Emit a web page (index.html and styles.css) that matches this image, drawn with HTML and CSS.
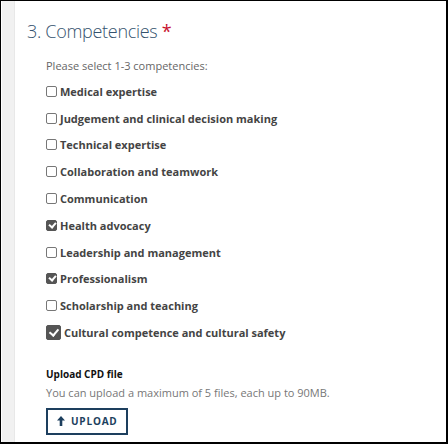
FILE: index.html
```html
<!DOCTYPE html>
<html>
<head>
  <title>Competencies</title>
  <link rel="stylesheet" href="styles.css">
</head>
<body>
  <div class="frame">
    <div class="strip"></div>
    <div class="panel">
      <h2 class="title">3. Competencies <span class="req">*</span></h2>
      <p class="hint">Please select 1-3 competencies:</p>

      <div class="checks">
        <label class="check"><span class="box"></span>Medical expertise</label>
        <label class="check"><span class="box"></span>Judgement and clinical decision making</label>
        <label class="check"><span class="box"></span>Technical expertise</label>
        <label class="check"><span class="box"></span>Collaboration and teamwork</label>
        <label class="check"><span class="box"></span>Communication</label>
        <label class="check"><span class="box on"></span>Health advocacy</label>
        <label class="check"><span class="box"></span>Leadership and management</label>
        <label class="check"><span class="box on"></span>Professionalism</label>
        <label class="check"><span class="box"></span>Scholarship and teaching</label>
        <label class="check"><span class="box on big"></span>Cultural competence and cultural safety</label>
      </div>

      <div class="upload">
        <div class="upload-title">Upload CPD file</div>
        <div class="upload-hint">You can upload a maximum of 5 files, each up to 90MB.</div>
        <button class="upload-btn">
          <svg width="8" height="10" viewBox="0 0 8 10"><path d="M4 0 L8 4.5 H5.3 V10 H2.7 V4.5 H0 Z" fill="#1d3f5e"/></svg>
          UPLOAD
        </button>
      </div>
    </div>
  </div>
</body>
</html>
```

FILE: styles.css
```css
html, body {
  margin: 0;
  padding: 0;
  background: #fff;
}

.frame {
  width: 448px;
  height: 444px;
  box-sizing: border-box;
  border: 1px solid #000;
  border-bottom-width: 2px;
  border-right-width: 2px;
  display: flex;
  overflow: hidden;
  font-family: "Open Sans", Arial, sans-serif;
}

.strip {
  width: 12px;
  margin-left: 1px;
  background: #f1f1f1;
  border-right: 1px solid #e8e8e8;
}

.panel {
  flex: 1;
  padding: 0 0 0 12px;
}

.title {
  margin: 15px 0 0 0;
  font-size: 18px;
  font-weight: 300;
  letter-spacing: -0.3px;
  color: #34526e;
  line-height: 30px;
}

.req {
  color: #c8102e;
  font-weight: 400;
}

.hint {
  margin: 12px 0 0 19px;
  font-size: 11px;
  color: #666;
  line-height: 16px;
}

.checks {
  margin: 4px 0 0 19px;
  display: flex;
  flex-direction: column;
}

.check {
  display: flex;
  align-items: center;
  height: 26.8px;
  font-size: 11px;
  font-weight: 700;
  color: #444;
}

.box {
  width: 9px;
  height: 9px;
  border: 1px solid #777;
  border-radius: 2px;
  margin-right: 3px;
  position: relative;
}

.box.on {
  background: #555;
  border-color: #555;
}

.box.on::after {
  content: "";
  position: absolute;
  left: 2.5px;
  top: 0px;
  width: 3px;
  height: 5px;
  border: solid #fff;
  border-width: 0 2px 2px 0;
  transform: rotate(40deg);
}

.box.big {
  width: 13px;
  height: 13px;
}

.box.big::after {
  left: 4px;
  top: 1px;
  width: 4px;
  height: 7px;
}

.upload {
  margin: 21px 0 0 19px;
}

.upload-title {
  font-size: 10px;
  font-weight: 700;
  color: #111;
  line-height: 14px;
}

.upload-hint {
  font-size: 11px;
  color: #777;
  margin-top: 4px;
  line-height: 16px;
}

.upload-btn {
  margin-top: 7px;
  display: flex;
  align-items: center;
  gap: 6px;
  height: 27px;
  padding: 0 8px 0 9px;
  background: #fff;
  border: 2px solid #1d3f5e;
  font-family: "Open Sans", Arial, sans-serif;
  font-size: 10px;
  font-weight: 700;
  letter-spacing: 0.8px;
  color: #1d3f5e;
}
```
